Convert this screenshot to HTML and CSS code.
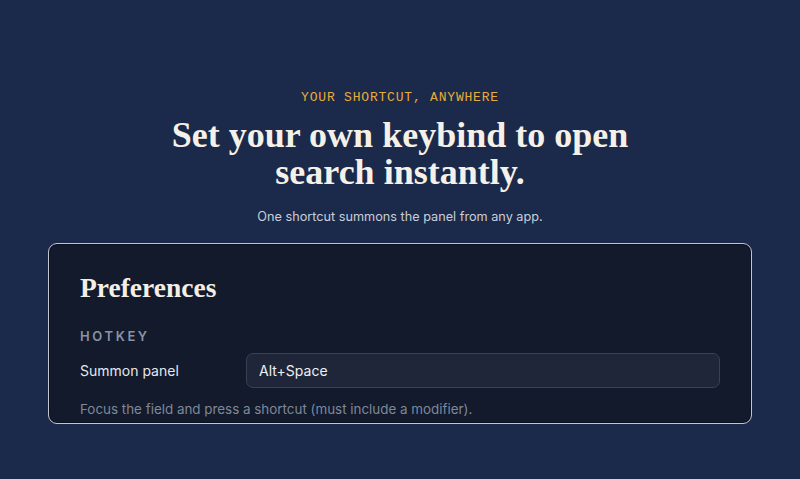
FILE: index.html
```html
<!DOCTYPE html>
<html lang="en">
<head>
    <meta charset="UTF-8">
    <meta name="viewport" content="width=device-width, initial-scale=1.0">
    <title>Hotkey</title>
    <link rel="stylesheet" href="styles.css">
</head>
<body>
    <main class="page">
        <header class="hero">
            <p class="eyebrow">YOUR SHORTCUT, ANYWHERE</p>
            <h1 class="hero-title">Set your own keybind to open<br>search instantly.</h1>
            <p class="hero-sub">One shortcut summons the panel from any app.</p>
        </header>

        <section class="card">
            <h2 class="card-title">Preferences</h2>
            <h3 class="section-label">HOTKEY</h3>
            <div class="field-row">
                <label for="hotkey" class="field-label">Summon panel</label>
                <input type="text" id="hotkey" class="hotkey-input" value="Alt+Space" readonly>
            </div>
            <p class="hint">Focus the field and press a shortcut (must include a modifier).</p>
        </section>
    </main>
</body>
</html>
```

FILE: styles.css
```css
* {
    padding: 0;
    margin: 0;
    box-sizing: border-box;
}

body {
    background: #1b2a4a;
    font-family: "Inter", "Liberation Sans", sans-serif;
    color: #e5e7eb;
}

.page {
    width: 704px;
    margin: 0 auto;
    padding-top: 90px;
}

.hero {
    text-align: center;
}

.eyebrow {
    font-family: "Liberation Mono", monospace;
    font-size: 13px;
    line-height: 16px;
    letter-spacing: 0.8px;
    color: #e9ab3c;
}

.hero-title {
    margin-top: 11px;
    font-family: "Liberation Serif", serif;
    font-weight: bold;
    font-size: 36px;
    line-height: 37px;
    color: #f5f1e8;
}

.hero-sub {
    margin-top: 17px;
    font-size: 12.7px;
    line-height: 18px;
    color: #c9ced9;
}

.card {
    margin-top: 17px;
    background: #121a2c;
    border: 1px solid #c3c6cf;
    border-radius: 9px;
    padding: 28px 31px 5px;
    box-shadow: inset 0 0 0 1px #0b1020;
}

.card-title {
    font-family: "Liberation Serif", serif;
    font-weight: bold;
    font-size: 27.5px;
    line-height: 32px;
    color: #f3efe6;
}

.section-label {
    margin-top: 24px;
    font-size: 13px;
    line-height: 16px;
    font-weight: 600;
    letter-spacing: 2.6px;
    color: #8a93a5;
}

.field-row {
    display: flex;
    align-items: center;
    margin-top: 9px;
}

.field-label {
    width: 166px;
    font-size: 14px;
    color: #e5e7eb;
}

.hotkey-input {
    flex: 1;
    height: 35px;
    padding: 0 12px;
    background: #1f2639;
    border: 1px solid #394155;
    border-radius: 7px;
    font-family: inherit;
    font-size: 14px;
    color: #eef0f4;
    outline: none;
}

.hint {
    margin-top: 12px;
    font-size: 13.4px;
    line-height: 18px;
    color: #7f889a;
}
```
